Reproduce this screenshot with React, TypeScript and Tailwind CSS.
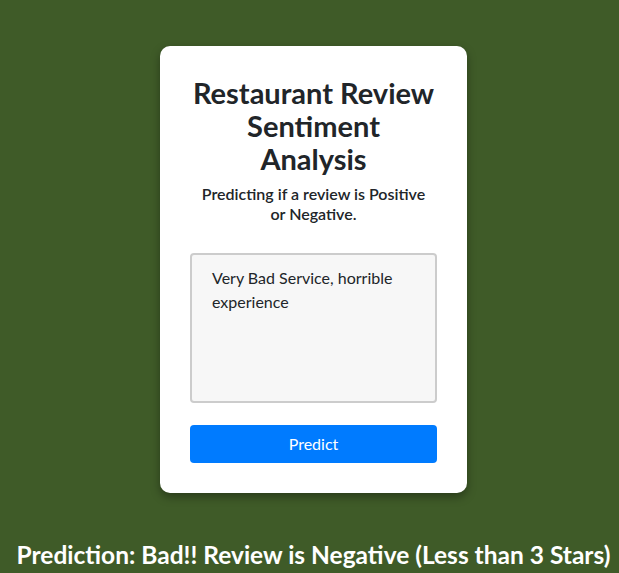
export default function App() {
  return (
    <main
      className="min-h-screen bg-[#3f5b28] flex flex-col items-center pt-[46px] pl-[8px]"
      style={{ fontFamily: 'Lato, "Open Sans", sans-serif' }}
    >
      {/* Card */}
      <div className="w-[307px] bg-white rounded-[10px] shadow-[0_4px_10px_rgba(0,0,0,0.35)] p-[30px] flex flex-col">
        <h1 className="text-center text-[29px] leading-[33px] font-bold text-[#212529]">
          Restaurant Review
          <br />
          Sentiment
          <br />
          Analysis
        </h1>
        <p className="mt-[9px] text-center text-[16px] leading-[20px] font-semibold text-[#212529] px-[10px]">
          Predicting if a review is Positive or Negative.
        </p>
        <textarea
          className="mt-[29px] h-[150px] w-full resize-none bg-[#f7f7f7] border-2 border-[#cccccc] rounded-[4px] px-[20px] py-[11px] text-[16px] leading-[24px] text-[#212529] outline-none"
          defaultValue="Very Bad Service, horrible experience"
        />
        <button className="mt-[22px] h-[38px] w-full bg-[#007bff] rounded-[4px] text-white text-[16px]">
          Predict
        </button>
      </div>

      {/* Result */}
      <h2 className="mt-[44px] text-center text-white text-[24.5px] font-bold whitespace-nowrap">
        Prediction: Bad!! Review is Negative (Less than 3 Stars)
      </h2>
    </main>
  );
}
